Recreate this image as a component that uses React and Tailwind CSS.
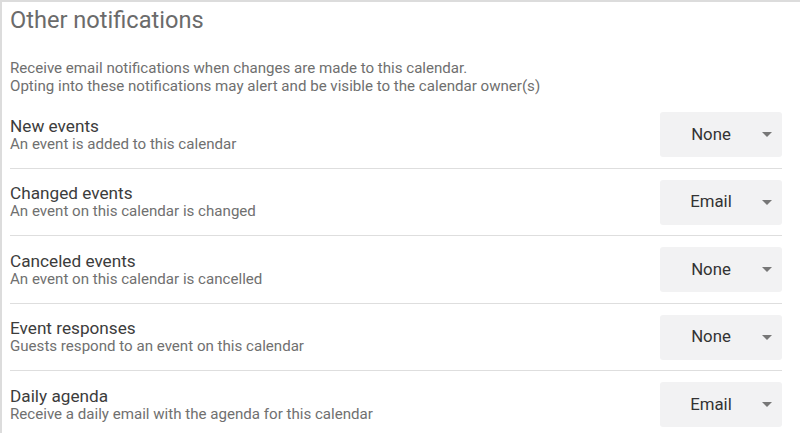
import React from "react";

const rows = [
  { t: "New events", s: "An event is added to this calendar", v: "None" },
  { t: "Changed events", s: "An event on this calendar is changed", v: "Email" },
  { t: "Canceled events", s: "An event on this calendar is cancelled", v: "None" },
  { t: "Event responses", s: "Guests respond to an event on this calendar", v: "None" },
  { t: "Daily agenda", s: "Receive a daily email with the agenda for this calendar", v: "Email" },
];

export default function App() {
  return (
    <div
      className="w-[800px] h-[433px] bg-white border-t-2 border-l-2 border-[#dcdcdc] overflow-hidden"
      style={{ fontFamily: "Roboto, 'Noto Sans', sans-serif" }}
    >
      <div className="pl-[8px] pr-[18px]">
        <h1 className="text-[23.6px] leading-[28px] pt-[4px] text-[#6b6b6b] font-normal">
          Other notifications
        </h1>
        <p className="mt-[25px] text-[15.1px] leading-[18px] text-[#6f6f6f]">
          Receive email notifications when changes are made to this calendar.
          <br />
          Opting into these notifications may alert and be visible to the calendar owner(s)
        </p>
        <div className="mt-[6px]">
          {rows.map((r, i) => (
            <div
              key={r.t}
              className={
                "flex items-center justify-between pt-[11px] pb-[10.5px] " +
                (i < rows.length - 1 ? "border-b border-[#dedede]" : "")
              }
            >
              <div className="flex flex-col">
                <span className="text-[17.2px] leading-[19px] text-[#3c3c3c]">{r.t}</span>
                <span className="text-[15.1px] leading-[17px] text-[#707070]">{r.s}</span>
              </div>
              <div className="w-[122px] h-[45px] bg-[#f2f2f3] rounded-[3px] flex items-center">
                <span className="w-[102px] text-center text-[16.8px] text-[#333]">{r.v}</span>
                <svg width="10" height="5" viewBox="0 0 10 5">
                  <path d="M0 0 L10 0 L5 5 Z" fill="#777" />
                </svg>
              </div>
            </div>
          ))}
        </div>
      </div>
    </div>
  );
}
